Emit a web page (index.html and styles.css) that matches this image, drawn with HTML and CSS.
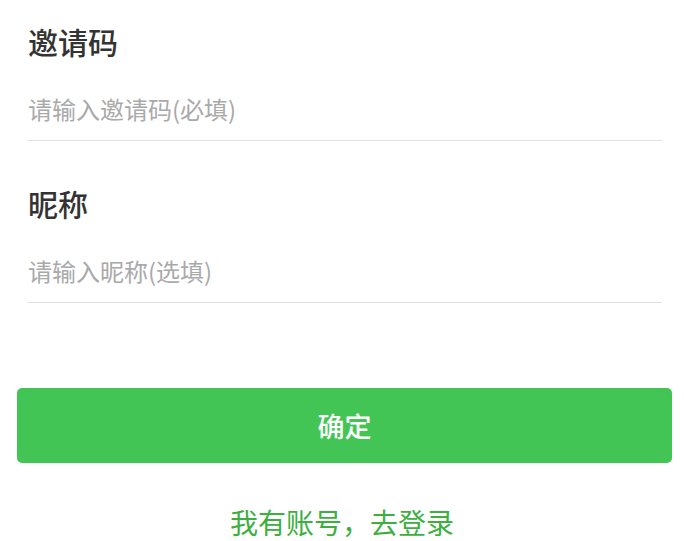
FILE: index.html
```html
<!DOCTYPE html>
<html lang="zh-CN">
  <head>
    <meta charset="UTF-8" />
    <meta name="viewport" content="width=device-width, initial-scale=1.0" />
    <title>注册</title>
    <link rel="stylesheet" href="styles.css">
  </head>
  <body>
    <main class="register">
      <form class="register-form">
        <div class="field">
          <label class="field-label" for="inviteCode">邀请码</label>
          <input
            class="field-input"
            type="text"
            id="inviteCode"
            placeholder="请输入邀请码(必填)" />
        </div>

        <div class="field">
          <label class="field-label" for="nickname">昵称</label>
          <input
            class="field-input"
            type="text"
            id="nickname"
            placeholder="请输入昵称(选填)" />
        </div>
      </form>

      <button type="button" class="confirm-button">确定</button>

      <a class="login-link" href="#">我有账号，去登录</a>
    </main>
  </body>
</html>
```

FILE: styles.css
```css
* {
  margin: 0;
  padding: 0;
  box-sizing: border-box;
  font-family: "Noto Sans CJK SC", "Noto Sans", sans-serif;
}

body {
  background-color: #ffffff;
  color: #333333;
  overflow: hidden;
}

.register {
  display: flex;
  flex-direction: column;
}

.register-form {
  display: flex;
  flex-direction: column;
  gap: 42px;
  padding: 21px 22px 0 27px;
}

.field {
  display: flex;
  flex-direction: column;
}

.field-label {
  font-size: 30px;
  line-height: 40px;
  font-weight: 500;
  color: #333333;
  padding-left: 1px;
}

.field-input {
  width: 100%;
  border: none;
  border-bottom: 1px solid #e2e2e2;
  outline: none;
  padding: 30px 0 15px 1px;
  font-size: 24px;
  line-height: 34px;
  height: 80px;
  color: #333333;
  background: transparent;
}

.field-input::placeholder {
  color: #a9a9a9;
}

.confirm-button {
  margin: 85px 12px 0 17px;
  height: 75px;
  border: none;
  border-radius: 5px;
  background-color: #43c555;
  color: #ffffff;
  font-size: 27px;
  font-weight: 500;
  cursor: pointer;
}

.login-link {
  margin-top: 39px;
  align-self: center;
  font-size: 28px;
  line-height: 40px;
  color: #3daf3f;
  text-decoration: none;
}
```
